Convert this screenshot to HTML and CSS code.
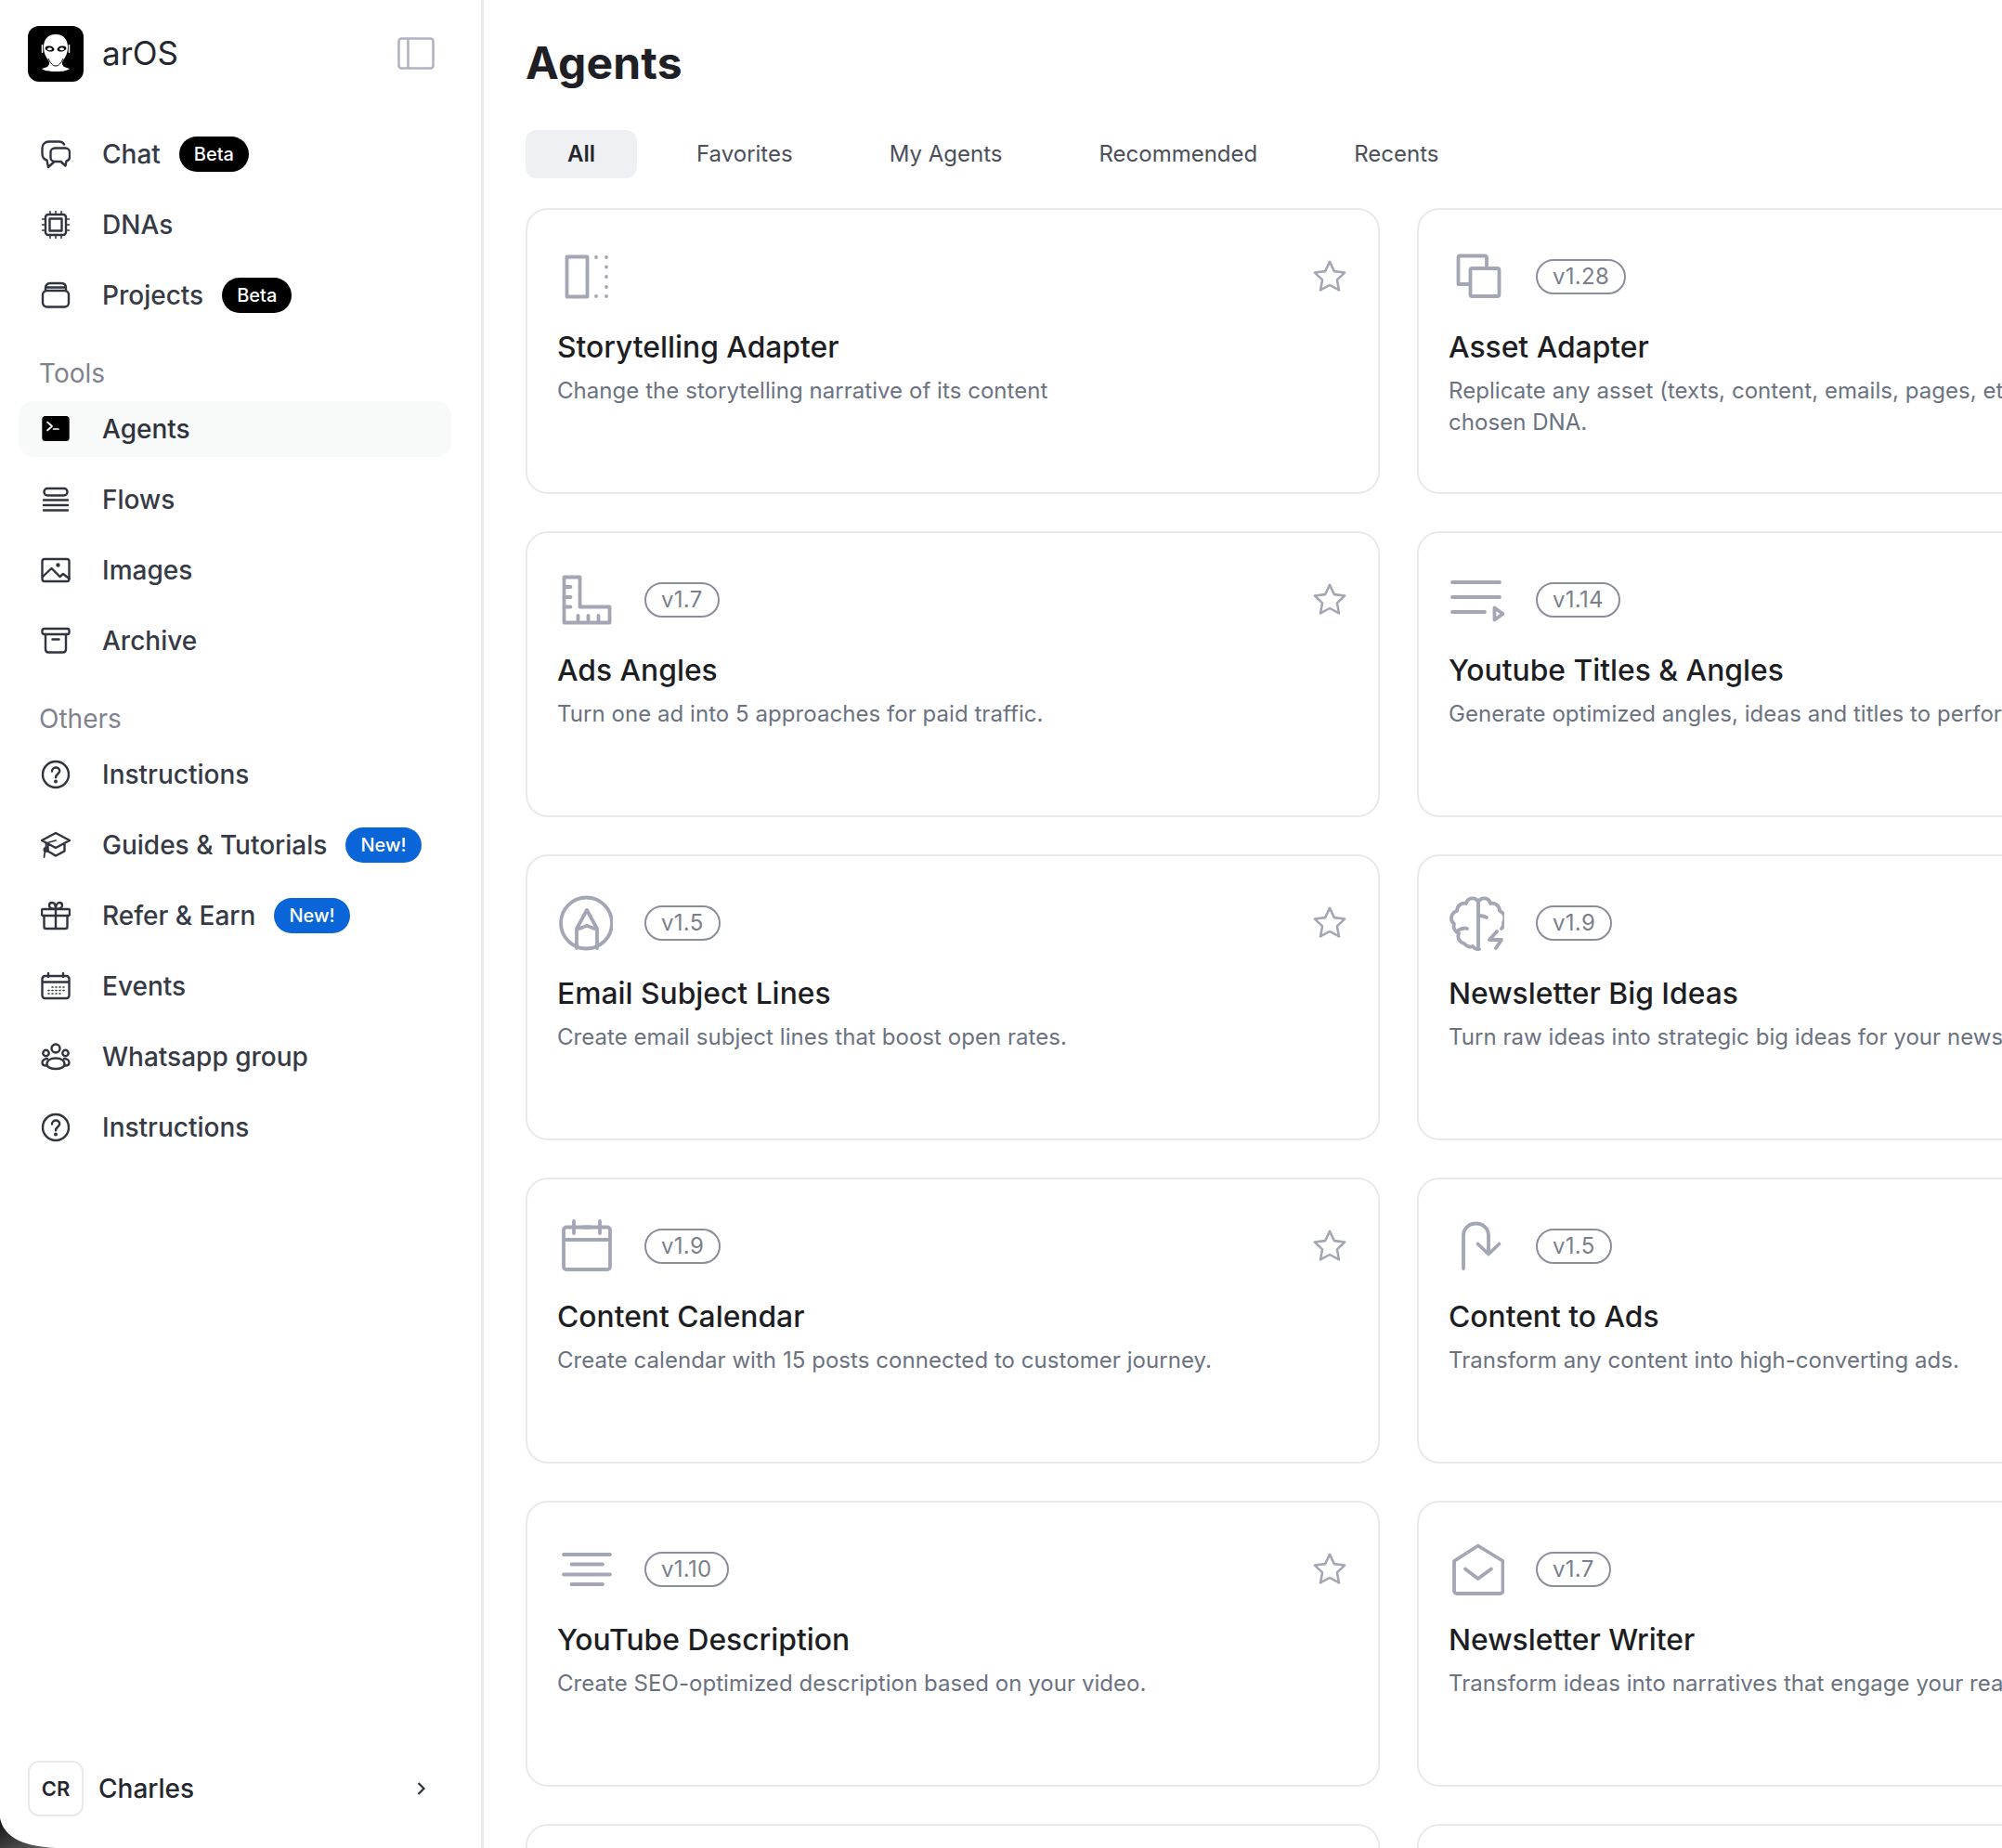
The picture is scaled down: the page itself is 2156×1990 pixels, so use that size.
FILE: index.html
```html
<!DOCTYPE html>
<html lang="en">
<head>
<meta charset="utf-8">
<title>arOS - Agents</title>
<link rel="stylesheet" href="styles.css">
</head>
<body>
<svg class="defs" aria-hidden="true"><symbol id="star" viewBox="0 0 36 36"><path d="M18 3.500l4.400 9.200 10.100 1.300-7.400 7 1.900 10-9-4.900-9 4.900 1.900-10-7.400-7 10.100-1.300z" fill="none" stroke="currentColor" stroke-width="2.300" stroke-linejoin="round"/></symbol></svg>
<div class="app">
<aside class="sidebar">
  <header class="brand">
    <div class="logo">
      <svg width="60" height="60" viewBox="0 0 60 60"><path d="M30 9c-9 0-13 6-13 14 0 5 2 10 5 14 2 3 1 5-1 7l-6 2c4 3 10 3 15 3s11 0 15-3l-6-2c-2-2-3-4-1-7 3-4 5-9 5-14 0-8-4-14-13-14z" fill="#fff"/><path d="M15.500 20v9M44.500 20v9" stroke="#fff" stroke-width="1.500"/><ellipse cx="23.500" cy="24.500" rx="5" ry="3" fill="#000" transform="rotate(12 23.500 24.500)"/><ellipse cx="36.500" cy="24.500" rx="5" ry="3" fill="#000" transform="rotate(-12 36.500 24.500)"/><ellipse cx="23.500" cy="24.700" rx="2.500" ry="1.500" fill="#fff"/><ellipse cx="36.500" cy="24.700" rx="2.500" ry="1.500" fill="#fff"/><path d="M22 35c2 5 5 8 8 8s6-3 8-8" fill="none" stroke="#000" stroke-width="1"/></svg>
    </div>
    <span class="brand-name">arOS</span>
    <svg class="collapse" width="40" height="36" viewBox="0 0 40 36" fill="none" stroke="#aeb2c0" stroke-width="2.500"><rect x="1.500" y="1.500" width="37" height="32" rx="3"/><path d="M11.500 1.500v32"/></svg>
  </header>

  <nav class="nav nav-main">
    <a class="item"><svg class="ic" viewBox="0 0 32 32"><path d="M25 5.500C24 3.500 22 2.500 19.500 2.500h-11C4.500 2.500 1.500 5.500 1.500 9.500v6c0 3.500 2 6 5 7l1.500 7.500 6-5.500"/><path d="M15 9.500h11.500c2.500 0 4.500 2 4.500 4.500v5c0 2.500-1.500 4-3.500 4.500l-1 5-5-4.500h-6.500c-2.500 0-4.500-2-4.500-4.500v-5.500c0-2.500 2-4.500 4.500-4.500z"/></svg><span>Chat</span><b class="tag">Beta</b></a>
    <a class="item"><svg class="ic" viewBox="0 0 32 32"><rect x="5" y="5" width="22" height="22" rx="3"/><rect x="9.500" y="9.500" width="13" height="13"/><path d="M10 1.500v3.500M16 1.500v3.500M22 1.500v3.500M10 27v3.500M16 27v3.500M22 27v3.500M1.500 10h3.500M1.500 16h3.500M1.500 22h3.500M27 10h3.500M27 16h3.500M27 22h3.500" stroke-width="1.500"/></svg><span>DNAs</span></a>
    <a class="item"><svg class="ic" viewBox="0 0 32 32"><rect x="2" y="11" width="28" height="17.500" rx="4.500"/><path d="M5 11V8c0-3 2-5 5-5h12c3 0 5 2 5 5v3M5 7.500h22"/></svg><span>Projects</span><b class="tag">Beta</b></a>
  </nav>

  <h2 class="label label-tools">Tools</h2>
  <nav class="nav">
    <a class="item active"><svg class="ic" viewBox="0 0 32 32"><rect x="1.300" y="2" width="29.400" height="27" rx="3.500" fill="#000" stroke="none"/><path d="M7 8.500l5 4.500-5 4.500M13.500 16h5.500" stroke="#fff" stroke-width="1.700"/></svg><span>Agents</span></a>
    <a class="item"><svg class="ic" viewBox="0 0 32 32"><rect x="3.500" y="4" width="25" height="7.500" rx="3.500"/><path d="M3 16.500h26M3 22h26M3 27.500h26"/></svg><span>Flows</span></a>
    <a class="item"><svg class="ic" viewBox="0 0 32 32"><rect x="1.500" y="4" width="29" height="24" rx="2.500"/><path d="M2 23l9.500-9 9 9 3.500-3 6.500 5"/><circle cx="18.500" cy="10.500" r="1" fill="#30343f"/></svg><span>Images</span></a>
    <a class="item"><svg class="ic" viewBox="0 0 32 32"><rect x="1.500" y="3" width="29" height="6" rx="2"/><path d="M5 9v16c0 2 1.500 3.500 3.500 3.500h15c2 0 3.500-1.500 3.500-3.500V9M12.500 14.500h7"/></svg><span>Archive</span></a>
  </nav>

  <h2 class="label label-others">Others</h2>
  <nav class="nav">
    <a class="item"><svg class="ic" viewBox="0 0 32 32"><circle cx="16" cy="16" r="14"/><path d="M12 12.500c0-2.500 2-4 4.200-4 2.300 0 4 1.600 4 3.700 0 3.300-4.200 3.300-4.200 7"/><circle cx="16" cy="23.500" r=".8" fill="#30343f"/></svg><span>Instructions</span></a>
    <a class="item"><svg class="ic" viewBox="0 0 32 32"><path d="M16 3l15 8-15 8-15-8zM7.500 15v7.500l8.500 5 9.500-5V15"/><path d="M16 11L5.500 14v7M5.500 21c-1.500 2-1.500 5-2 8" stroke-width="1.800"/><circle cx="5.500" cy="21" r="1.800"/></svg><span>Guides &amp; Tutorials</span><b class="tag tag-new">New!</b></a>
    <a class="item"><svg class="ic" viewBox="0 0 32 32"><rect x="1" y="9" width="30" height="7" rx="1.500"/><path d="M3.500 16v12c0 1 .8 2 2 2h21c1.200 0 2-1 2-2V16M16 9v21M16 9c-2 0-7 0-7-4 0-2 1.500-3 3-3 2.500 0 4 3 4 7zM16 9c2 0 7 0 7-4 0-2-1.500-3-3-3-2.500 0-4 3-4 7z"/></svg><span>Refer &amp; Earn</span><b class="tag tag-new">New!</b></a>
    <a class="item"><svg class="ic" viewBox="0 0 32 32"><rect x="1.500" y="5" width="29" height="24" rx="3"/><path d="M2 11.500h28M8 2v4M24 2v4"/><path d="M12 17h1M16 17h1M20 17h1M24 17h1M8 20.500h1M12 20.500h1M16 20.500h1M20 20.500h1M24 20.500h1M8 24h1M12 24h1M16 24h1M20 24h1" stroke-width="1.600"/></svg><span>Events</span></a>
    <a class="item"><svg class="ic" viewBox="0 0 32 32"><circle cx="16" cy="7" r="4.500"/><circle cx="5.500" cy="12" r="3.200"/><circle cx="26.500" cy="12" r="3.200"/><path d="M6.500 24c0-4 4-6.500 9.500-6.500s9.500 2.500 9.500 6.500c0 3-4 5-9.500 5s-9.500-2-9.500-5z"/><path d="M7 18c-3.500 0-5.500 2-5.500 4.500 0 2 2 3 4.500 3M25 18c3.500 0 5.500 2 5.500 4.500 0 2-2 3-4.500 3"/></svg><span>Whatsapp group</span></a>
    <a class="item"><svg class="ic" viewBox="0 0 32 32"><circle cx="16" cy="16" r="14"/><path d="M12 12.500c0-2.500 2-4 4.200-4 2.300 0 4 1.600 4 3.700 0 3.300-4.200 3.300-4.200 7"/><circle cx="16" cy="23.500" r=".8" fill="#30343f"/></svg><span>Instructions</span></a>
  </nav>

  <footer class="user">
    <div class="avatar">CR</div>
    <span class="user-name">Charles</span>
    <svg class="chev" width="12" height="16" viewBox="0 0 12 16" fill="none" stroke="#30343f" stroke-width="2.200"><path d="M2.500 2l6 6-6 6"/></svg>
  </footer>
</aside>

<main class="main">
  <h1 class="title">Agents</h1>
  <div class="tabs">
    <a class="tab tab-on">All</a>
    <a class="tab">Favorites</a>
    <a class="tab">My Agents</a>
    <a class="tab">Recommended</a>
    <a class="tab">Recents</a>
  </div>
  <section class="grid">
    <article class="card">
      <div class="card-top">
        <svg class="ci" viewBox="0 0 60 60"><rect x="10.500" y="8.500" width="22" height="43"/><path d="M42 9h.01M53 9h.01M53 19.500h.01M53 30h.01M53 41h.01M53 51h.01M42 51h.01"/></svg>
        <svg class="star"><use href="#star"/></svg>
      </div>
      <h3>Storytelling Adapter</h3>
      <p>Change the storytelling narrative of its content</p>
    </article>
    <article class="card">
      <div class="card-top">
        <svg class="ci" viewBox="0 0 60 60"><path d="M10.500 36.500V9.500a2 2 0 0 1 2-2H39a2 2 0 0 1 2 2v10"/><rect x="23.500" y="21" width="31" height="30" rx="2"/><path d="M10.500 38H23"/></svg>
        <span class="ver">v1.28</span>
        <svg class="star"><use href="#star"/></svg>
      </div>
      <h3>Asset Adapter</h3>
      <p>Replicate any asset (texts, content, emails, pages, etc.) according to your chosen DNA.</p>
    </article>

    <article class="card">
      <div class="card-top">
        <svg class="ci" viewBox="0 0 60 60"><path d="M7.500 5.500h17v32h32v17h-49z"/><path d="M7.500 16h7M7.500 27h7M7.500 37.500h7M22.500 47v7M33.500 47v7M44.500 47v7"/></svg>
        <span class="ver">v1.7</span>
        <svg class="star"><use href="#star"/></svg>
      </div>
      <h3>Ads Angles</h3>
      <p>Turn one ad into 5 approaches for paid traffic.</p>
    </article>
    <article class="card">
      <div class="card-top">
        <svg class="ci" viewBox="0 0 60 60"><path d="M4 11h51M4 27h51M4 43h35"/><path d="M49.500 38.500l9 6.500-9 6.500z"/></svg>
        <span class="ver">v1.14</span>
        <svg class="star"><use href="#star"/></svg>
      </div>
      <h3>Youtube Titles &amp; Angles</h3>
      <p>Generate optimized angles, ideas and titles to perform better on YouTube.</p>
    </article>

    <article class="card">
      <div class="card-top">
        <svg class="ci" viewBox="0 0 60 60"><circle cx="31.500" cy="30" r="27.500"/><path d="M21 57V36l11-20 11 20v21M22 36.500c3-1 7-2 10-4 3 2 7 3 10 4"/></svg>
        <span class="ver">v1.5</span>
        <svg class="star"><use href="#star"/></svg>
      </div>
      <h3>Email Subject Lines</h3>
      <p>Create email subject lines that boost open rates.</p>
    </article>
    <article class="card">
      <div class="card-top">
        <svg class="ci" viewBox="0 0 60 60"><path d="M32 7v49M32 7a7 7 0 0 0-13 2 8 8 0 0 0-10 8 8 8 0 0 0-3 14 8 8 0 0 0 5 10 8 8 0 0 0 6 11 8 8 0 0 0 9 3 7 7 0 0 0 7 3M32 7a7 7 0 0 1 13 2 8 8 0 0 1 10 8 8 8 0 0 1 4 12 8 8 0 0 1-2 7"/><path d="M10 38c3-2 7-3 10-2M33 22c3 0 6 1 8 2"/><path d="M52 39l-8 9h13l-6 9"/></svg>
        <span class="ver">v1.9</span>
        <svg class="star"><use href="#star"/></svg>
      </div>
      <h3>Newsletter Big Ideas</h3>
      <p>Turn raw ideas into strategic big ideas for your newsletter.</p>
    </article>

    <article class="card">
      <div class="card-top">
        <svg class="ci" viewBox="0 0 60 60"><rect x="7" y="9.500" width="50" height="45.500" rx="3"/><path d="M7 23h50M18 3v13M46 3v13M28 9.500h8"/></svg>
        <span class="ver">v1.9</span>
        <svg class="star"><use href="#star"/></svg>
      </div>
      <h3>Content Calendar</h3>
      <p>Create calendar with 15 posts connected to customer journey.</p>
    </article>
    <article class="card">
      <div class="card-top">
        <svg class="ci" viewBox="0 0 60 60"><path d="M16 54V18.500C16 11 22 5.500 29.500 5.500S43 11 43 18.500V38M31.500 27.500L43 38.500l11.500-11"/></svg>
        <span class="ver">v1.5</span>
        <svg class="star"><use href="#star"/></svg>
      </div>
      <h3>Content to Ads</h3>
      <p>Transform any content into high-converting ads.</p>
    </article>

    <article class="card">
      <div class="card-top">
        <svg class="ci" viewBox="0 0 60 60"><path d="M7 14h50M15.500 24.500h33.500M7 35.500h50M15.500 46h33.500"/></svg>
        <span class="ver">v1.10</span>
        <svg class="star"><use href="#star"/></svg>
      </div>
      <h3>YouTube Description</h3>
      <p>Create SEO-optimized description based on your video.</p>
    </article>
    <article class="card">
      <div class="card-top">
        <svg class="ci" viewBox="0 0 60 60"><path d="M6 21L31.700 4.500 58.500 21v32a3 3 0 0 1-3 3H9a3 3 0 0 1-3-3z"/><path d="M18 29.500l13.700 10.500L46 29.500"/></svg>
        <span class="ver">v1.7</span>
        <svg class="star"><use href="#star"/></svg>
      </div>
      <h3>Newsletter Writer</h3>
      <p>Transform ideas into narratives that engage your readers.</p>
    </article>

    <article class="card"></article>
    <article class="card"></article>
  </section>
</main>
</div>
<svg class="corner" width="60" height="32" viewBox="0 0 60 32" aria-hidden="true"><defs><linearGradient id="cg" x1="0" y1="0" x2="1" y2="1"><stop offset="0" stop-color="#111"/><stop offset="1" stop-color="#666"/></linearGradient></defs><path d="M0 0C4 18 20 30 60 32H0z" fill="url(#cg)"/></svg>
</body>
</html>
```

FILE: styles.css
```css
* { box-sizing: border-box; }
html, body { margin: 0; height: 100%; }
body {
  background: #fff;
  font-family: Inter, "Noto Sans", sans-serif;
  color: #1d1e23;
  overflow: hidden;
  position: relative;
}
.defs { width: 0; height: 0; position: absolute; }
.app { display: flex; height: 1990px; overflow: hidden; }

.sidebar {
  flex: 0 0 521px;
  height: 100%;
  border-right: 3px solid #e8e9ec;
  padding: 28px 32px 34px 20px;
  display: flex;
  flex-direction: column;
}
.brand { display: flex; align-items: center; padding-left: 10px; height: 60px; }
.logo { width: 60px; height: 60px; border-radius: 12px; background: #000; flex: none; }
.brand-name { margin: 0 0 2px 20px; font-size: 35px; font-weight: 400; color: #25272e; }
.collapse { margin-left: auto; margin-right: 18px; }

.nav { display: flex; flex-direction: column; gap: 16px; }
.nav-main { margin-top: 48px; }
.item {
  height: 60px;
  display: flex;
  align-items: center;
  padding-left: 24px;
  border-radius: 16px;
  font-size: 28px;
  font-weight: 450;
  color: #363a45;
}
.item.active { background: #f8f9f9; color: #2f323c; }
.ic {
  width: 32px;
  height: 32px;
  margin-right: 34px;
  flex: none;
  fill: none;
  stroke: #30343f;
  stroke-width: 2.400;
  stroke-linecap: round;
  stroke-linejoin: round;
}
.tag {
  margin-left: 20px;
  height: 38px;
  padding: 0 16px;
  border-radius: 19px;
  background: #000;
  color: #fff;
  font-size: 20px;
  font-weight: 450;
  line-height: 38px;
}
.tag-new { background: #0a66d8; }
.label { margin: 0; padding-left: 22px; font-size: 28px; line-height: 40px; font-weight: 400; color: #80838f; }
.label-tools { margin-top: 34px; margin-bottom: 10px; }
.label-others { margin-top: 34px; margin-bottom: 10px; }

.user { margin-top: auto; display: flex; align-items: center; padding-left: 10px; }
.avatar {
  width: 60px;
  height: 60px;
  border: 2px solid #e8e9ec;
  border-radius: 12px;
  display: flex;
  align-items: center;
  justify-content: center;
  font-size: 22px;
  font-weight: 600;
  color: #25272e;
}
.user-name { margin-left: 16px; font-size: 28px; font-weight: 450; color: #25272e; }
.chev { margin-left: auto; margin-right: 26px; }

.main { flex: 1; min-width: 0; padding: 0 0 0 45px; }
.title { margin: 0; padding-top: 36px; font-size: 48px; letter-spacing: .2px; line-height: 64px; font-weight: 650; color: #1f2025; }
.tabs { display: flex; gap: 16px; margin-top: 40px; }
.tab {
  height: 52px;
  padding: 0 44px 2px;
  border-radius: 12px;
  display: flex;
  align-items: center;
  font-size: 24px;
  font-weight: 400;
  color: #4b4f5a;
}
.tab-on { padding: 0 45px 2px; margin-right: 4px; background: #eef0f3; color: #25272e; font-weight: 600; }

.grid {
  display: grid;
  grid-template-columns: 920px 920px;
  grid-auto-rows: 308px;
  gap: 40px;
  margin-top: 32px;
}
.card {
  border: 2px solid #e8e9ec;
  border-radius: 24px;
  padding: 42px 32px 0;
}
.card-top { display: flex; align-items: center; height: 60px; }
.ci {
  width: 60px;
  height: 60px;
  flex: none;
  fill: none;
  stroke: #a3a6b4;
  stroke-width: 3.800;
  stroke-linecap: round;
  stroke-linejoin: round;
}
.ver {
  margin-left: 34px;
  height: 38px;
  padding: 0 16px;
  border: 2px solid #8a8e9a;
  border-radius: 19px;
  font-size: 24px;
  letter-spacing: .3px;
  line-height: 33px;
  color: #7b7f8c;
}
.star { width: 40px; height: 40px; margin-left: auto; color: #a3a6b4; }
.card h3 { margin: 26px 0 0; font-size: 31.800px; line-height: 40px; font-weight: 450; color: #1d1e23; }
.card p { margin: 10px 0 0; font-size: 24px; letter-spacing: .05px; line-height: 34px; color: #6b7280; }

.corner { position: absolute; left: 0; bottom: 0; }
```
